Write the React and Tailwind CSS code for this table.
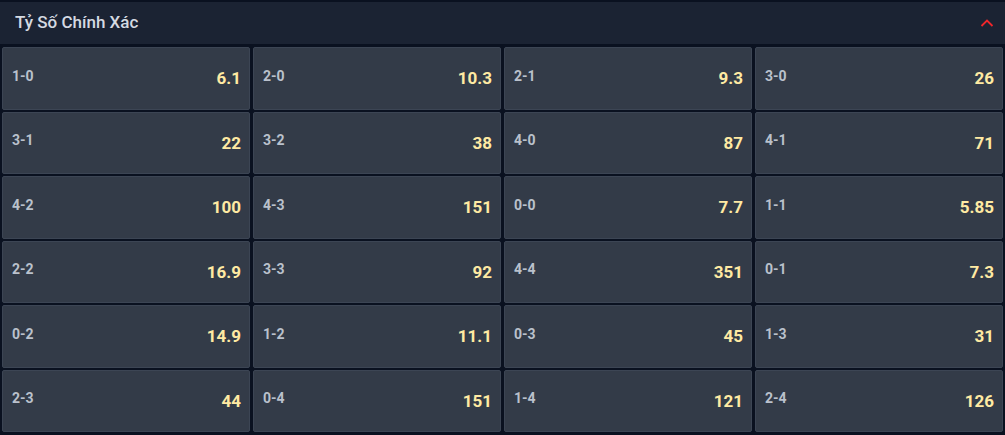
import React from "react";

const odds = [
  ["1-0", "6.1"], ["2-0", "10.3"], ["2-1", "9.3"], ["3-0", "26"],
  ["3-1", "22"], ["3-2", "38"], ["4-0", "87"], ["4-1", "71"],
  ["4-2", "100"], ["4-3", "151"], ["0-0", "7.7"], ["1-1", "5.85"],
  ["2-2", "16.9"], ["3-3", "92"], ["4-4", "351"], ["0-1", "7.3"],
  ["0-2", "14.9"], ["1-2", "11.1"], ["0-3", "45"], ["1-3", "31"],
  ["2-3", "44"], ["0-4", "151"], ["1-4", "121"], ["2-4", "126"],
];

const App = () => {
  return (
    <div className="w-[1005px] h-[435px] bg-[#0a1120] font-['Roboto',sans-serif] pt-[2px]">
      <div className="h-[42px] bg-[#1b2333] flex items-center justify-between pl-[15px] pr-[11px]">
        <h2 className="text-[17px] font-medium text-[#d5dae2]">Tỷ Số Chính Xác</h2>
        <svg width="14" height="10" viewBox="0 0 14 10" fill="none">
          <path d="M1.5 8 L7 2.5 L12.5 8" stroke="#f0262b" strokeWidth="1.8" />
        </svg>
      </div>
      <div className="grid grid-cols-4 gap-x-[3px] gap-y-[2px] px-[2px] pt-[3px]">
        {odds.map(([score, price]) => (
          <div
            key={score}
            className="h-[62.5px] bg-[#333b48] border border-[#3c4554] rounded-[2px] flex items-center justify-between pl-[9px] pr-[8px]"
          >
            <span className="text-[14px] font-bold text-[#bac1cc] -mt-[4px]">{score}</span>
            <span className="text-[17px] font-bold text-[#ffeaa3] mt-[1px]">{price}</span>
          </div>
        ))}
      </div>
    </div>
  );
};

export default App;
